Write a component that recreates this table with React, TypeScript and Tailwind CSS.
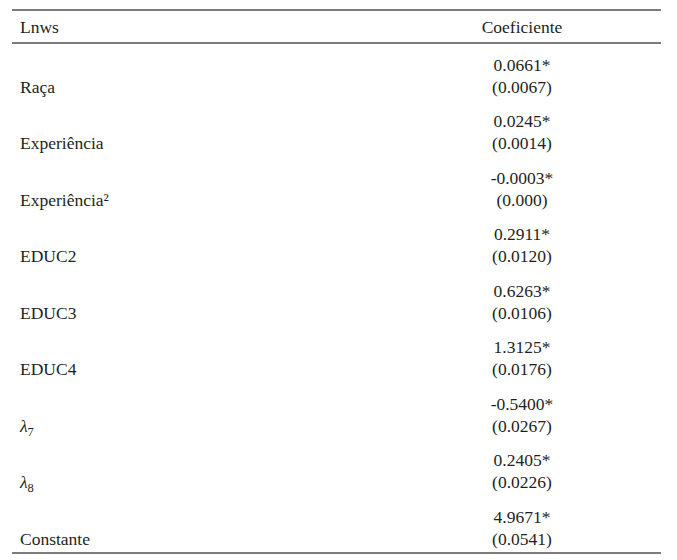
import type { ReactNode } from "react";

type Row = {
  label: ReactNode;
  coef: string;
  se: string;
};

function Lambda({ sub }: { sub: string }) {
  return (
    <span>
      <span className="italic">λ</span>
      <sub className="text-[12.5px] relative top-[4px] align-baseline">{sub}</sub>
    </span>
  );
}

const rows: Row[] = [
  { label: "Raça", coef: "0.0661*", se: "(0.0067)" },
  { label: "Experiência", coef: "0.0245*", se: "(0.0014)" },
  { label: "Experiência²", coef: "-0.0003*", se: "(0.000)" },
  { label: "EDUC2", coef: "0.2911*", se: "(0.0120)" },
  { label: "EDUC3", coef: "0.6263*", se: "(0.0106)" },
  { label: "EDUC4", coef: "1.3125*", se: "(0.0176)" },
  { label: <Lambda sub="7" />, coef: "-0.5400*", se: "(0.0267)" },
  { label: <Lambda sub="8" />, coef: "0.2405*", se: "(0.0226)" },
  { label: "Constante", coef: "4.9671*", se: "(0.0541)" },
];

export default function App() {
  return (
    <div className="w-[677px] h-[560px] bg-white text-[#231f20] text-[17.5px] leading-[22px] font-['Liberation_Serif','Times_New_Roman',serif]">
      <div className="ml-[12px] pt-[9px] w-[649px]">
        <div className="border-t-2 border-b-2 border-[#7d7d7d]">
          <div className="flex h-[33px] items-center border-b-2 border-[#7d7d7d]">
            <div className="flex-1 pl-[8px]">Lnws</div>
            <div className="w-[278px] text-center">Coeficiente</div>
          </div>

          <div>
            {rows.map((r, i) => (
              <div
                key={i}
                className={
                  "flex items-end " +
                  (i === 0 ? "pt-[9.5px] " : "pt-[12.5px] ") +
                  (i === rows.length - 1 ? "pb-[2px]" : "")
                }
              >
                <div className="flex-1 pl-[8px] h-[22px]">{r.label}</div>
                <div className="w-[278px] text-center">
                  <div>{r.coef}</div>
                  <div>{r.se}</div>
                </div>
              </div>
            ))}
          </div>
        </div>
      </div>
    </div>
  );
}
